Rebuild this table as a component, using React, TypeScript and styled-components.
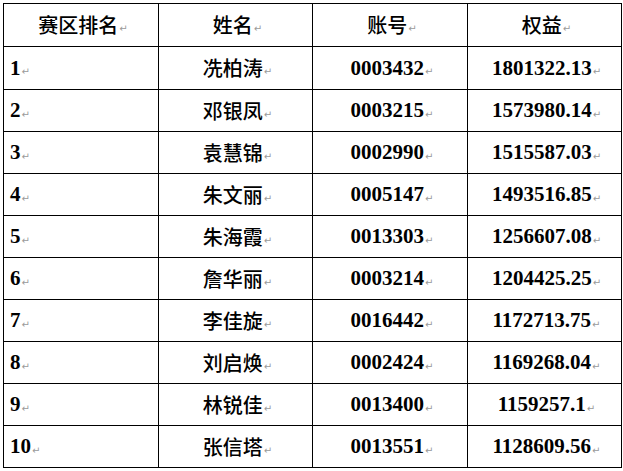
import React from "react";
import styled, { createGlobalStyle } from "styled-components";

const Global = createGlobalStyle`
  html, body { margin: 0; padding: 0; background: #fff; }
  body { width: 623px; height: 471px; overflow: hidden; }
`;

const Page = styled.div`
  padding: 3px 0 0 3px;
`;

const Grid = styled.div`
  display: grid;
  grid-template-columns: 155px 154px 155px 154px;
  grid-template-rows: 43px 43px repeat(9, 42px);
  border-top: 1px solid #000;
  border-left: 1px solid #000;
  width: max-content;
`;

const Cell = styled.div<{ $left?: boolean; $cjk?: boolean }>`
  display: flex;
  align-items: center;
  justify-content: ${(p) => (p.$left ? "flex-start" : "center")};
  padding-left: ${(p) => (p.$left ? "6px" : "4px")};
  border-right: 1px solid #000;
  border-bottom: 1px solid #000;
  font-family: ${(p) =>
    p.$cjk
      ? '"Noto Sans CJK SC", "Liberation Serif", sans-serif'
      : '"Liberation Serif", "Noto Sans CJK SC", serif'};
  font-weight: ${(p) => (p.$cjk ? 500 : 700)};
  font-size: ${(p) => (p.$cjk ? "20px" : "21px")};
  color: #000;
  line-height: 1;
  white-space: nowrap;
`;

const Mark = styled.span`
  font-family: "DejaVu Sans", sans-serif;
  font-weight: 400;
  font-size: 10px;
  color: #9a9a9a;
  margin-left: 1px;
  align-self: center;
  padding-top: 8px;
`;

const rows: [string, string, string, string][] = [
  ["1", "冼柏涛", "0003432", "1801322.13"],
  ["2", "邓银凤", "0003215", "1573980.14"],
  ["3", "袁慧锦", "0002990", "1515587.03"],
  ["4", "朱文丽", "0005147", "1493516.85"],
  ["5", "朱海霞", "0013303", "1256607.08"],
  ["6", "詹华丽", "0003214", "1204425.25"],
  ["7", "李佳旋", "0016442", "1172713.75"],
  ["8", "刘启焕", "0002424", "1169268.04"],
  ["9", "林锐佳", "0013400", "1159257.1"],
  ["10", "张信塔", "0013551", "1128609.56"],
];

const headers = ["赛区排名", "姓名", "账号", "权益"];

export default function App() {
  return (
    <Page>
      <Global />
      <Grid>
        {headers.map((h) => (
          <Cell key={h} $cjk>
            {h}
            <Mark>↵</Mark>
          </Cell>
        ))}
        {rows.map(([rank, name, acct, eq]) => (
          <React.Fragment key={rank}>
            <Cell $left>
              {rank}
              <Mark>↵</Mark>
            </Cell>
            <Cell $cjk>
              {name}
              <Mark>↵</Mark>
            </Cell>
            <Cell>
              {acct}
              <Mark>↵</Mark>
            </Cell>
            <Cell>
              {eq}
              <Mark>↵</Mark>
            </Cell>
          </React.Fragment>
        ))}
      </Grid>
    </Page>
  );
}
